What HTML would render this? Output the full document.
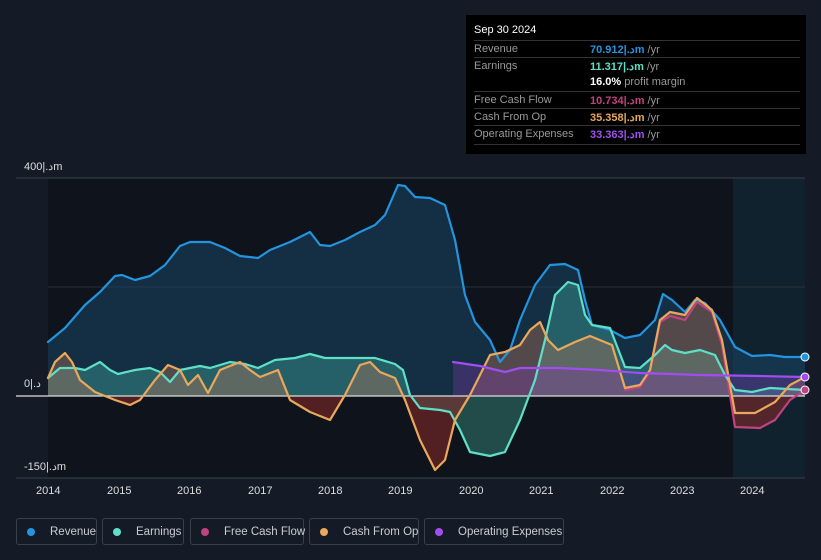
<!DOCTYPE html>
<html><head><meta charset="utf-8"><style>
body{margin:0;width:821px;height:560px;background:#151b26;font-family:"Liberation Sans","Noto Sans CJK SC",sans-serif;overflow:hidden;position:relative}
.tt{position:absolute;left:466px;top:15px;width:340px;height:139px;background:#000;color:#fff;font-size:11px}
.tt .h{position:absolute;left:8px;top:9px;font-size:11px}
.row{position:absolute;left:8px;width:326px;height:17px;border-top:1px solid #333;color:#999}
.row span{position:absolute;left:116px;top:2px;white-space:nowrap}
.row i{font-style:normal;position:absolute;left:0;top:2px;white-space:nowrap}
.lg{position:absolute;top:518px;height:27px;border:1px solid #3a404a;border-radius:3px;color:#c9ccd2;font-size:11.5px;line-height:26px;box-sizing:border-box;white-space:nowrap}
.lg b{position:absolute;left:10px;top:9px;width:8px;height:8px;border-radius:50%}
.lg span{position:absolute;left:33px;top:0;white-space:nowrap}
.ax{position:absolute;color:#ddd;font-size:11px;white-space:nowrap}
</style></head><body>
<svg width="821" height="560" style="position:absolute;left:0;top:0">
<defs><clipPath id="neg"><rect x="0" y="396" width="821" height="100"/></clipPath><clipPath id="pos"><rect x="0" y="0" width="821" height="396"/></clipPath></defs>
<rect x="48" y="178" width="685" height="300" fill="#0f131b"/>
<rect x="733" y="178" width="72" height="300" fill="#11222f"/>
<line x1="16" y1="178" x2="805" y2="178" stroke="#3a404a"/>
<line x1="48" y1="287" x2="805" y2="287" stroke="#2a303a"/>
<line x1="16" y1="478" x2="805" y2="478" stroke="#3a404a"/>
<g stroke-linejoin="round" stroke-linecap="round">
<path fill="#1a4566" fill-opacity="0.55" d="M48,396 L48,342 65,328 85,305 100,292 115,276 122,275 135,280 150,276 165,265 180,246 190,242 210,242 225,248 240,256 258,258 270,250 290,242 310,232 320,245 330,246 345,240 360,232 375,225 385,215 398,185 405,186 415,197 430,198 445,205 455,240 465,295 475,322 490,340 500,362 510,350 520,320 535,285 550,265 565,264 578,270 585,300 592,325 610,330 625,338 640,335 655,320 663,294 672,300 685,312 695,300 705,303 720,320 735,347 752,356 770,355 785,357 805,357 805,396Z"/>
<path fill="#4fd1b8" fill-opacity="0.3" d="M48,396 L48,378 60,368 75,368 85,370 100,362 110,370 118,374 135,370 150,368 160,372 170,382 180,370 200,366 210,368 230,362 245,364 258,368 275,360 295,358 310,354 325,358 375,358 395,364 403,370 410,395 420,408 440,410 450,412 460,430 470,452 490,456 505,452 520,420 535,380 545,340 555,295 568,282 578,285 585,315 592,325 610,328 625,367 640,368 655,355 665,345 672,350 685,353 700,350 715,355 725,375 735,390 752,392 770,388 805,390 805,396Z"/>
<path fill="#c97a5a" fill-opacity="0.35" clip-path="url(#pos)" d="M48,396 L48,378 55,362 65,353 72,362 80,380 95,392 115,400 130,405 140,400 155,380 168,365 180,370 188,385 198,375 208,393 220,370 240,362 250,370 260,377 278,370 290,400 310,412 330,420 345,395 360,365 370,362 380,372 395,378 405,400 420,440 435,470 445,460 455,420 470,395 480,375 490,355 505,352 520,345 530,330 540,322 548,340 558,350 575,342 590,336 612,345 625,388 640,385 650,370 660,320 670,312 685,315 697,298 712,310 722,340 735,413 755,413 775,402 790,385 805,377 805,396Z"/>
<path fill="#8a2a2a" fill-opacity="0.55" clip-path="url(#neg)" d="M48,396 L48,378 55,362 65,353 72,362 80,380 95,392 115,400 130,405 140,400 155,380 168,365 180,370 188,385 198,375 208,393 220,370 240,362 250,370 260,377 278,370 290,400 310,412 330,420 345,395 360,365 370,362 380,372 395,378 405,400 420,440 435,470 445,460 455,420 470,395 480,375 490,355 505,352 520,345 530,330 540,322 548,340 558,350 575,342 590,336 612,345 625,388 640,385 650,370 660,320 670,312 685,315 697,298 712,310 722,340 735,427 760,428 775,420 790,400 805,390 805,396Z"/>
<path fill="#7a3aa8" fill-opacity="0.35" d="M453,396 L453,362 480,366 505,372 520,368 560,368 600,370 640,373 700,375 760,376 805,377 805,396Z"/>
</g>
<line x1="16" y1="396" x2="805" y2="396" stroke="#ddd" stroke-width="1.2"/>
<g fill="none" stroke-width="2.2" stroke-linejoin="round" stroke-linecap="round">
<path stroke="#c0427e" d="M625,390 640,387 650,372 660,322 670,316 685,320 697,302 712,312 722,345 735,427 760,428 775,420 790,400 805,390"/>
<path stroke="#2394df" d="M48,342 65,328 85,305 100,292 115,276 122,275 135,280 150,276 165,265 180,246 190,242 210,242 225,248 240,256 258,258 270,250 290,242 310,232 320,245 330,246 345,240 360,232 375,225 385,215 398,185 405,186 415,197 430,198 445,205 455,240 465,295 475,322 490,340 500,362 510,350 520,320 535,285 550,265 565,264 578,270 585,300 592,325 610,330 625,338 640,335 655,320 663,294 672,300 685,312 695,300 705,303 720,320 735,347 752,356 770,355 785,357 805,357"/>
<path stroke="#5ee0c8" d="M48,378 60,368 75,368 85,370 100,362 110,370 118,374 135,370 150,368 160,372 170,382 180,370 200,366 210,368 230,362 245,364 258,368 275,360 295,358 310,354 325,358 375,358 395,364 403,370 410,395 420,408 440,410 450,412 460,430 470,452 490,456 505,452 520,420 535,380 545,340 555,295 568,282 578,285 585,315 592,325 610,328 625,367 640,368 655,355 665,345 672,350 685,353 700,350 715,355 725,375 735,390 752,392 770,388 805,390"/>
<path stroke="#e9a85a" d="M48,378 55,362 65,353 72,362 80,380 95,392 115,400 130,405 140,400 155,380 168,365 180,370 188,385 198,375 208,393 220,370 240,362 250,370 260,377 278,370 290,400 310,412 330,420 345,395 360,365 370,362 380,372 395,378 405,400 420,440 435,470 445,460 455,420 470,395 480,375 490,355 505,352 520,345 530,330 540,322 548,340 558,350 575,342 590,336 612,345 625,388 640,385 650,370 660,320 670,312 685,315 697,298 712,310 722,340 735,413 755,413 775,402 790,385 805,377"/>
<path stroke="#a04ef0" d="M453,362 480,366 505,372 520,368 560,368 600,370 640,373 700,375 760,376 805,377"/>
</g>
<circle cx="805" cy="357" r="4" fill="#2394df" stroke="#fff"/>
<circle cx="805" cy="377" r="4" fill="#a04ef0" stroke="#fff"/>
<circle cx="805" cy="390" r="4" fill="#c0427e" stroke="#fff"/>
</svg>
<div class="ax" style="left:24px;top:160px">400|.دm</div>
<div class="ax" style="left:24px;top:377px">0|.د</div>
<div class="ax" style="left:24px;top:460px">-150|.دm</div>
<div class="ax" style="left:36px;top:485px">2014</div>
<div class="ax" style="left:107px;top:485px">2015</div>
<div class="ax" style="left:177px;top:485px">2016</div>
<div class="ax" style="left:248px;top:485px">2017</div>
<div class="ax" style="left:318px;top:485px">2018</div>
<div class="ax" style="left:388px;top:485px">2019</div>
<div class="ax" style="left:459px;top:485px">2020</div>
<div class="ax" style="left:529px;top:485px">2021</div>
<div class="ax" style="left:600px;top:485px">2022</div>
<div class="ax" style="left:670px;top:485px">2023</div>
<div class="ax" style="left:740px;top:485px">2024</div>
<div class="tt">
<div class="h">Sep 30 2024</div>
<div class="row" style="top:25px"><i>Revenue</i><span><b style="color:#2394df">70.912|.دm</b> /yr</span></div>
<div class="row" style="top:42px"><i>Earnings</i><span><b style="color:#5ee0c8">11.317|.دm</b> /yr</span></div>
<div class="row" style="top:59px;border-top:none"><span><b style="color:#fff">16.0%</b> profit margin</span></div>
<div class="row" style="top:76px"><i>Free Cash Flow</i><span><b style="color:#c0427e">10.734|.دm</b> /yr</span></div>
<div class="row" style="top:93px"><i>Cash From Op</i><span><b style="color:#e9a85a">35.358|.دm</b> /yr</span></div>
<div class="row" style="top:110px"><i>Operating Expenses</i><span><b style="color:#a04ef0">33.363|.دm</b> /yr</span></div>
<div class="row" style="top:129px;height:0"></div>
</div>
<div class="lg" style="left:16px;width:81px"><b style="background:#2394df"></b><span>Revenue</span></div>
<div class="lg" style="left:102px;width:82px"><b style="background:#5ee0c8"></b><span>Earnings</span></div>
<div class="lg" style="left:190px;width:114px"><b style="background:#c0427e"></b><span>Free Cash Flow</span></div>
<div class="lg" style="left:309px;width:110px"><b style="background:#e9a85a"></b><span>Cash From Op</span></div>
<div class="lg" style="left:424px;width:140px"><b style="background:#a04ef0"></b><span>Operating Expenses</span></div>
</body></html>
